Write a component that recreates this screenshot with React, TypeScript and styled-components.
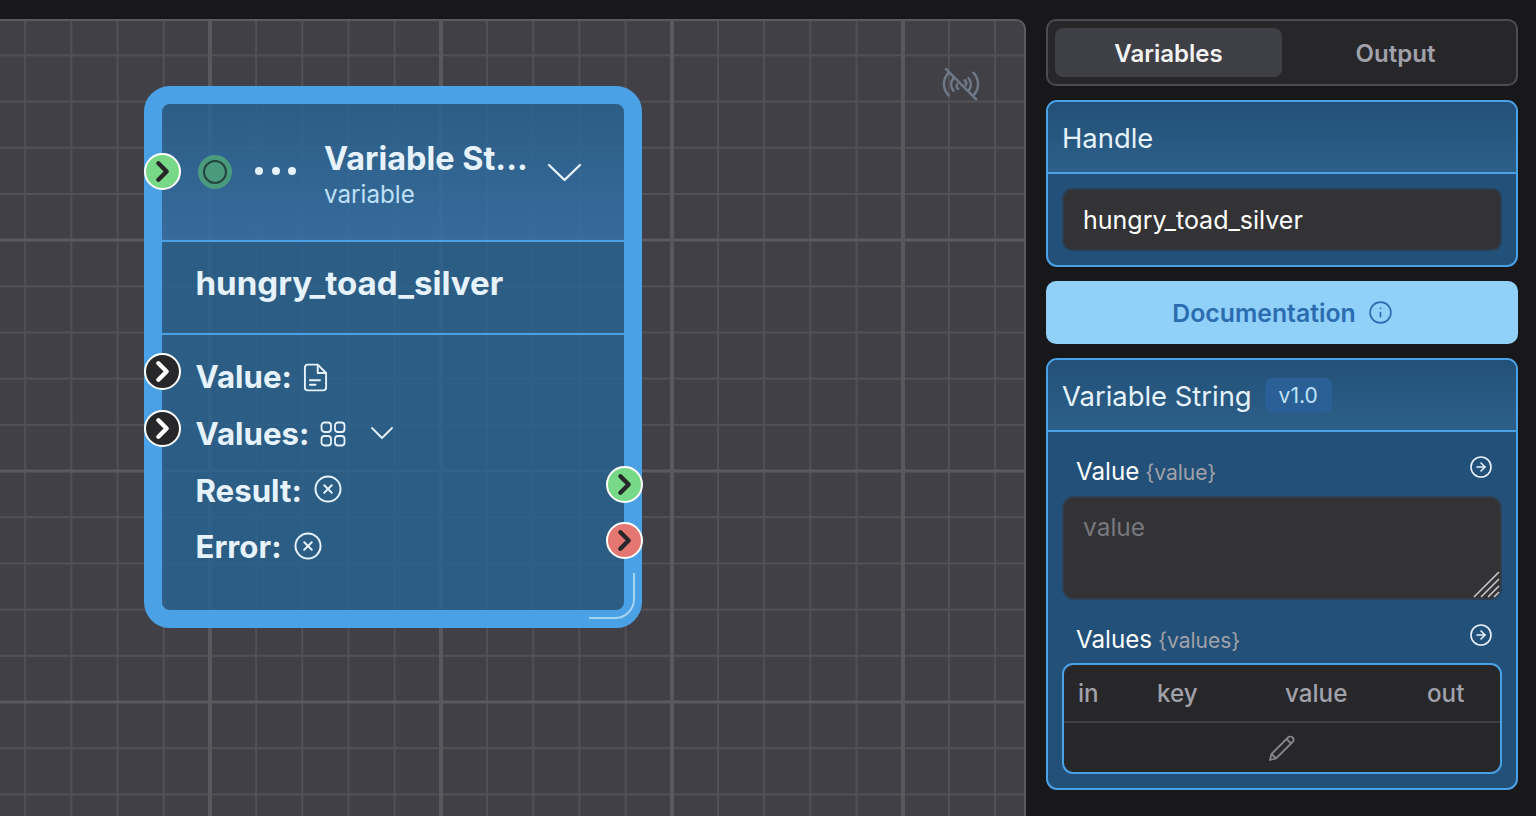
import React from "react";
import styled, { createGlobalStyle } from "styled-components";
import { ChevronRight, CircleX, CircleArrowRight, Info } from "lucide-react";

const Global = createGlobalStyle`
  html, body { margin: 0; padding: 0; height: 100%; overflow: hidden; background: #18181b; }
  #root { height: 100%; }
  * { box-sizing: border-box; }
`;

const Page = styled.div`
  width: 1536px; height: 816px; display: flex; gap: 20px;
  padding: 19px 18px 0 0; background: #18181b; overflow: hidden;
  font-family: Inter, "Liberation Sans", sans-serif; color: #e6f3fd;
`;
const Canvas = styled.div`
  position: relative; width: 1026px; height: 830px; flex: none;
  border: 2px solid #5b5a60; border-left: none; border-top-right-radius: 10px;
  background-color: #414046;
  background-image:
    linear-gradient(to right, #59585d 4.5px, transparent 4.5px),
    linear-gradient(to bottom, #5a595e 3.5px, transparent 3.5px),
    linear-gradient(to right, #515055 2px, transparent 2px),
    linear-gradient(to bottom, #515055 2px, transparent 2px);
  background-size: 231px 231px, 231px 231px, 46.2px 46.2px, 46.2px 46.2px;
  background-position: 208px 0, 0 217.5px, 24.2px 0, 0 -12.8px;
`;
const SignalOff = styled.svg`
  position: absolute; left: 942px; top: 47px; width: 38px; height: 36px;
  fill: none; stroke: #6f7886; stroke-width: 2.6; stroke-linecap: round;
`;
const Node = styled.div`
  position: absolute; left: 144px; top: 65px; width: 498px; height: 542px;
  border: 18px solid #4aa1e5; border-radius: 26px; background: rgba(39, 100, 149, 0.8);
  background-clip: padding-box; display: flex; flex-direction: column;
`;
const NodeHeader = styled.div`
  height: 138px; flex: none; display: flex; align-items: center; padding-left: 36px;
  border-bottom: 2px solid #4aa1e5;
  background: linear-gradient(180deg, rgba(77, 139, 206, 0) 0%, rgba(77, 139, 206, 0.3) 100%);
  border-radius: 8px 8px 0 0;
`;
const StatusDot = styled.div`
  width: 34px; height: 34px; flex: none; border-radius: 50%; background: #4a9a7e; display: grid; place-items: center;
`;
const StatusRing = styled.div`
  width: 24px; height: 24px; border-radius: 50%; border: 2px solid #24453f; background: #4a9a7e;
`;
const Dots = styled.div`
  display: flex; gap: 8.5px; margin-left: 23px; margin-bottom: 2px;
`;
const Dot = styled.span`
  width: 8px; height: 8px; border-radius: 50%; background: #e6f3fd;
`;
const TitleBlock = styled.div`
  margin-left: 28px; width: 223px; display: flex; flex-direction: column; margin-top: 5px;
`;
const Title = styled.div`
  font-size: 32.4px; line-height: 38px; font-weight: 700; color: #e6f3fd; white-space: nowrap;
`;
const Subtitle = styled.div`
  font-size: 24.2px; line-height: 30px; color: #bee0f8; margin-top: 2px;
`;
const LargeChevron = styled.svg`
  width: 35px; height: 20px; flex: none; fill: none; stroke: #e6f3fd; stroke-width: 2.4; stroke-linecap: round; stroke-linejoin: round;
`;
const SmallChevron = styled.svg`
  width: 24px; height: 14px; flex: none; margin-left: 13px; margin-top: -2px; fill: none; stroke: #e6f3fd; stroke-width: 1.8; stroke-linecap: round; stroke-linejoin: round;
`;
const NameRow = styled.div`
  height: 93px; flex: none; display: flex; align-items: center; padding: 0 0 9px 33.5px;
  border-bottom: 2px solid #4aa1e5; font-size: 33.1px; font-weight: 700; color: #e6f3fd;
`;
const Fields = styled.div`
  display: flex; flex-direction: column; padding: 14px 0 0 33.5px;
`;
const Field = styled.div`
  height: 56.7px; display: flex; align-items: center; gap: 11px;
  font-size: 31.2px; font-weight: 700; color: #e6f3fd;
`;
const OutIcon = styled(CircleX)`
  margin-top: -3px; flex: none;
`;
const Handle = styled.div<{ $bg: string; $fg: string; $x: number; $y: number }>`
  position: absolute; left: ${(p) => p.$x}px; top: ${(p) => p.$y}px;
  width: 37px; height: 37px; border-radius: 50%; border: 2.5px solid #fff;
  background: ${(p) => p.$bg}; color: ${(p) => p.$fg}; display: grid; place-items: center;
`;
const ResizeMark = styled.svg`
  position: absolute; right: -13px; bottom: -11px; width: 50px; height: 50px;
  fill: none; stroke: #a6d4f5; stroke-width: 2;
`;
const Side = styled.div`
  width: 472px; flex: none; display: flex; flex-direction: column; gap: 14px;
`;
const Tabs = styled.div`
  height: 67px; border: 2px solid #4c4b51; border-radius: 10px; background: #27272a; padding: 7px; display: flex;
`;
const Tab = styled.div<{ $active?: boolean }>`
  width: 227px; border-radius: 8px; display: grid; place-items: center;
  font-size: 24px; font-weight: 600; padding-top: 1px;
  background: ${(p) => (p.$active ? "#3f3f46" : "transparent")};
  color: ${(p) => (p.$active ? "#f4f4f5" : "#a1a1aa")};
`;
const Panel = styled.div`
  border: 2px solid #4aa1e5; border-radius: 11px; background: #235078; overflow: hidden; flex: none;
`;
const PanelHeader = styled.div`
  height: 72px; display: flex; align-items: center; padding: 2px 14px 0; gap: 14px;
  border-bottom: 2px solid #4aa1e5; font-size: 27.4px; color: #e6f3fd;
  background: linear-gradient(180deg, #235078 0%, #2c6089 100%);
`;
const InputWrap = styled.div`
  padding: 14px 14px 14px;
`;
const TextInput = styled.div`
  height: 63px; border-radius: 10px; background: #333335; border: 2px solid #2b3f52; padding: 0 19px;
  display: flex; align-items: center; font-size: 25px; color: #fff;
`;
const DocButton = styled.div`
  height: 63px; border-radius: 10px; background: #90d0f9; color: #2b6cb0; flex: none;
  display: flex; align-items: center; justify-content: center; gap: 12px;
  font-size: 24.8px; font-weight: 600; padding-left: 1px;
`;
const PanelBody = styled.div`
  padding: 0 14px 14px;
`;
const FieldLabel = styled.div`
  display: flex; align-items: center; height: 64px; padding: 15px 9px 0 14px; gap: 6px;
  font-size: 24.2px; color: #fff;
`;
const FieldKey = styled.span`
  font-size: 21px; color: #a1a1aa; margin-top: 2px;
`;
const RowIcon = styled(CircleArrowRight)`
  margin-left: auto; color: #e6f3fd; margin-top: -10px; flex: none;
`;
const TextArea = styled.div`
  position: relative; height: 104px; border-radius: 12px; background: #333335; border: 2px solid #2f3f50;
  padding: 14px 19px; font-size: 24.5px; color: #77777d;
`;
const Grip = styled.svg`
  position: absolute; right: 0; bottom: 0; width: 28px; height: 28px; stroke: #c8c8cc; stroke-width: 1.6;
`;
const TableBox = styled.div`
  height: 111px; border: 2px solid #4aa1e5; border-radius: 11px; background: #27272a; margin-top: -1px;
`;
const TableHead = styled.div`
  height: 58px; border-bottom: 2px solid #3f3f46; display: grid;
  grid-template-columns: 79px 128px 142px 1fr; align-items: center; padding: 1px 0 0 14px;
  font-size: 24.2px; font-weight: 500; color: #a1a1aa;
`;
const TableFoot = styled.div`
  height: 49px; display: grid; place-items: center; color: #85858b;
`;
const VersionBadge = styled.span`
  height: 35px; padding: 0 14px; border-radius: 7px; background: #2b6096; display: grid; place-items: center;
  font-size: 21px; color: #bee3f8; margin-top: -2px; margin-left: -1px;
`;

const FileIcon = () => (
  <svg width="25" height="29" viewBox="0 0 22 26" fill="none" stroke="#e6f3fd" strokeWidth="1.7" strokeLinecap="round" strokeLinejoin="round">
    <path d="M13 1.5H4a2.5 2.5 0 0 0-2.5 2.5v18A2.5 2.5 0 0 0 4 24.5h14a2.5 2.5 0 0 0 2.5-2.5V9L13 1.5Z" />
    <path d="M13 1.5V9h7.5" />
    <path d="M6 15.5h9M6 19.5h5" />
  </svg>
);
const GridIcon = () => (
  <svg width="26" height="26" viewBox="0 0 26 26" fill="none" stroke="#e6f3fd" strokeWidth="1.8">
    <rect x="1.5" y="1.5" width="9.5" height="9.5" rx="3" />
    <rect x="15" y="1.5" width="9.5" height="9.5" rx="3" />
    <rect x="1.5" y="15" width="9.5" height="9.5" rx="3" />
    <rect x="15" y="15" width="9.5" height="9.5" rx="3" />
  </svg>
);
const PencilIcon = () => (
  <svg width="28" height="28" viewBox="0 0 28 28" fill="none" stroke="currentColor" strokeWidth="1.8" strokeLinejoin="round">
    <path d="M2 26l1.5-6L20 3.5a2.5 2.5 0 0 1 4.5 4.5L8 24.5 2 26Z" />
    <path d="M18.5 5l4.5 4.5M3.5 20 8 24.5" />
  </svg>
);

const Chev = () => <ChevronRight size={33} strokeWidth={3.2} />;

export default function App() {
  return (
    <Page>
      <Global />
      <Canvas>
        <SignalOff viewBox="0 0 40 38">
          <path d="M4 1l32 32" />
          <path d="M7 5a17 17 0 0 0 0 24M33 5a17 17 0 0 1 0 24" />
          <path d="M12 11a10 10 0 0 0 0 13M28 11a10 10 0 0 1 0 13" />
          <path d="M16 17a3.5 3.5 0 0 0 1 5M24 13a4 4 0 0 1 1 5" />
        </SignalOff>
        <Node>
          <NodeHeader>
            <StatusDot><StatusRing /></StatusDot>
            <Dots><Dot /><Dot /><Dot /></Dots>
            <TitleBlock>
              <Title>Variable St...</Title>
              <Subtitle>variable</Subtitle>
            </TitleBlock>
            <LargeChevron viewBox="0 0 35 20"><path d="M2 3l15.5 15L33 3" /></LargeChevron>
          </NodeHeader>
          <NameRow>hungry_toad_silver</NameRow>
          <Fields>
            <Field>Value: <FileIcon /></Field>
            <Field>Values: <GridIcon /><SmallChevron viewBox="0 0 24 14"><path d="M2 2l10 10L22 2" /></SmallChevron></Field>
            <Field>Result: <OutIcon size={30} strokeWidth={1.6} /></Field>
            <Field>Error: <OutIcon size={30} strokeWidth={1.6} /></Field>
          </Fields>
          <ResizeMark viewBox="0 0 50 50">
            <path d="M2 47h26a19 19 0 0 0 19-19V2" />
          </ResizeMark>
          <Handle $bg="#77d887" $fg="#27272a" $x={-18} $y={49}><Chev /></Handle>
          <Handle $bg="#27272a" $fg="#fff" $x={-18} $y={249}><Chev /></Handle>
          <Handle $bg="#27272a" $fg="#fff" $x={-18} $y={306}><Chev /></Handle>
          <Handle $bg="#77d887" $fg="#27272a" $x={444} $y={362}><Chev /></Handle>
          <Handle $bg="#e57773" $fg="#27272a" $x={444} $y={418}><Chev /></Handle>
        </Node>
      </Canvas>
      <Side>
        <Tabs>
          <Tab $active>Variables</Tab>
          <Tab>Output</Tab>
        </Tabs>
        <Panel>
          <PanelHeader>Handle</PanelHeader>
          <InputWrap><TextInput>hungry_toad_silver</TextInput></InputWrap>
        </Panel>
        <DocButton>Documentation <Info size={25} strokeWidth={1.6} /></DocButton>
        <Panel>
          <PanelHeader>Variable String <VersionBadge>v1.0</VersionBadge></PanelHeader>
          <PanelBody>
            <FieldLabel>Value <FieldKey>{"{value}"}</FieldKey><RowIcon size={24} strokeWidth={1.6} /></FieldLabel>
            <TextArea>value
              <Grip viewBox="0 0 28 28">
                <path d="M2 27 27 2M9 27 27 9M16 27 27 16M22 27l5-5" />
              </Grip>
            </TextArea>
            <FieldLabel>Values <FieldKey>{"{values}"}</FieldKey><RowIcon size={24} strokeWidth={1.6} /></FieldLabel>
            <TableBox>
              <TableHead><span>in</span><span>key</span><span>value</span><span>out</span></TableHead>
              <TableFoot><PencilIcon /></TableFoot>
            </TableBox>
          </PanelBody>
        </Panel>
      </Side>
    </Page>
  );
}
